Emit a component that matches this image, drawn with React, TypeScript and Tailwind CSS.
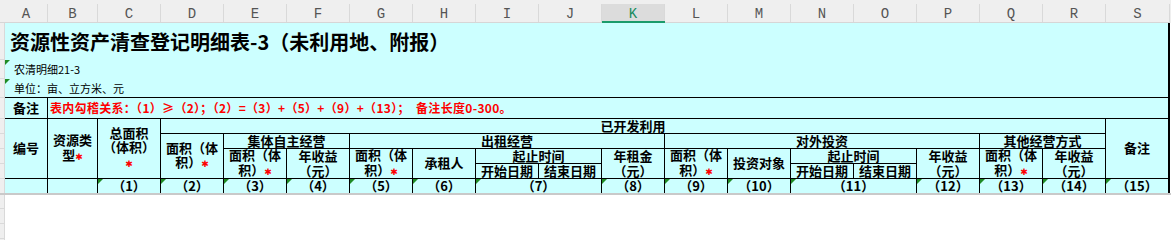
import type { ReactNode } from "react";

const COLS = ["A", "B", "C", "D", "E", "F", "G", "H", "I", "J", "K", "L", "M", "N", "O", "P", "Q", "R", "S"];

const WIDTH: Record<string, string> = {
  A: "w-[43px]",
  B: "w-[50px]",
  S: "w-[64px]",
};

function Tri() {
  return (
    <span className="absolute left-0 top-0 h-0 w-0 border-t-[5px] border-r-[5px] border-t-[#1f8b24] border-r-transparent" />
  );
}

function Star() {
  return <span className="font-['DejaVu_Sans',sans-serif] text-[9px] text-[#ff0000]">✱</span>;
}

// header cell; span classes come in through className
function Hd({ className = "", children }: { className?: string; children?: ReactNode }) {
  return (
    <div
      className={`flex items-center justify-center border-r border-b border-black text-center text-[13px] font-bold ${className}`}
    >
      <div className="leading-[14.5px] whitespace-nowrap">{children}</div>
    </div>
  );
}

function Num({ className = "", tri = true, children }: { className?: string; tri?: boolean; children?: ReactNode }) {
  return (
    <div className={`relative flex items-center justify-center border-r border-black text-[13px] font-bold ${className}`}>
      {tri && <Tri />}
      <span className="leading-[14px]">{children}</span>
    </div>
  );
}

export default function App() {
  return (
    <div className="h-[240px] w-[1171px] overflow-hidden bg-white font-['Noto_Sans_CJK_SC','Noto_Sans',sans-serif] text-black">
      {/* column letters */}
      <div className="flex flex-col bg-[#efefef]">
        <div className="h-[4px]" />
        <div className="flex h-[19px]">
          <div className="w-[5px] shrink-0 border-b border-[#d6d6d6]" />
          {COLS.map((c) => (
            <div
              key={c}
              className={`flex shrink-0 ${WIDTH[c] ?? "w-[63px]"} ${
                c === "K"
                  ? "border-b-2 border-[#1b9b6b] bg-[#dcdcdc] text-[#168a5c]"
                  : "border-b border-[#d6d6d6] text-[#555]"
              }`}
            >
              <span className="flex-1 pt-[2px] text-center font-['Liberation_Mono',monospace] text-[14px] leading-[16px]">
                {c}
              </span>
              <span className="w-px bg-[#d9d9d9]" />
            </div>
          ))}
        </div>
      </div>

      <div className="flex">
        <div className="flex w-[5px] shrink-0 flex-col border-r border-[#d9d9d9] bg-[#efefef]">
          <div className="h-[37px] border-b border-[#dadada]" />
          <div className="h-[19px] border-b border-[#dadada]" />
          <div className="h-[19px] border-b border-[#dadada]" />
          <div className="h-[21px] border-b border-[#dadada]" />
          <div className="h-[15px] border-b border-[#dadada]" />
          <div className="h-[15px] border-b border-[#dadada]" />
          <div className="h-[15px] border-b border-[#dadada]" />
          <div className="h-[15px] border-b border-[#dadada]" />
          <div className="h-[14px]" />
        </div>

        <div className="grid grid-cols-[43px_50px_repeat(16,63px)_64px] grid-rows-[37px_19px_19px_21px_15px_15px_15px_15px_14px] bg-[#ccffff]">
          <div className="col-span-19 flex items-center border-r-2 border-black pl-[5px] text-[20px] font-bold">
            资源性资产清查登记明细表-3（未利用地、附报）
          </div>
          <div className="relative col-span-19 flex items-center border-r-2 border-black pl-[9px] text-[11px]">
            <Tri />
            农清明细21-3
          </div>
          <div className="relative col-span-19 flex items-center border-r-2 border-b border-black pl-[9px] text-[11px]">
            <Tri />
            单位：亩、立方米、元
          </div>

          <div className="flex items-center justify-center border-r border-b border-black text-[13px] font-bold">备注</div>
          <div className="col-span-18 flex items-center border-r-2 border-b border-black pl-[2px] text-[12px] font-bold tracking-[0.3px] text-[#ff0000]">
            表内勾稽关系：（1）≥（2）；（2）=（3）+（5）+（9）+（13）；　备注长度0-300。
          </div>

          {/* header row 1 */}
          <Hd className="row-span-4">编号</Hd>
          <Hd className="row-span-4">
            资源类
            <br />
            型<Star />
          </Hd>
          <Hd className="row-span-4">
            总面积
            <br />
            （体积）
            <br />
            <Star />
          </Hd>
          <Hd className="col-span-15">已开发利用</Hd>
          <Hd className="row-span-4 border-r-2">备注</Hd>

          {/* header row 2 */}
          <Hd className="row-span-3">
            面积（体
            <br />
            积）<Star />
          </Hd>
          <Hd className="col-span-2">集体自主经营</Hd>
          <Hd className="col-span-5">出租经营</Hd>
          <Hd className="col-span-5">对外投资</Hd>
          <Hd className="col-span-2">其他经营方式</Hd>

          {/* header row 3 */}
          <Hd className="row-span-2">
            面积（体
            <br />
            积）<Star />
          </Hd>
          <Hd className="row-span-2">
            年收益
            <br />
            （元）
          </Hd>
          <Hd className="row-span-2">
            面积（体
            <br />
            积）<Star />
          </Hd>
          <Hd className="row-span-2">承租人</Hd>
          <Hd className="col-span-2">起止时间</Hd>
          <Hd className="row-span-2">
            年租金
            <br />
            （元）
          </Hd>
          <Hd className="row-span-2">
            面积（体
            <br />
            积）<Star />
          </Hd>
          <Hd className="row-span-2">投资对象</Hd>
          <Hd className="col-span-2">起止时间</Hd>
          <Hd className="row-span-2">
            年收益
            <br />
            （元）
          </Hd>
          <Hd className="row-span-2">
            面积（体
            <br />
            积）<Star />
          </Hd>
          <Hd className="row-span-2">
            年收益
            <br />
            （元）
          </Hd>

          {/* header row 4 */}
          <Hd>开始日期</Hd>
          <Hd>结束日期</Hd>
          <Hd>开始日期</Hd>
          <Hd>结束日期</Hd>

          {/* column numbers */}
          <div className="border-r border-black" />
          <div className="border-r border-black" />
          <Num>（1）</Num>
          <Num>（2）</Num>
          <Num>（3）</Num>
          <Num>（4）</Num>
          <Num>（5）</Num>
          <Num>（6）</Num>
          <Num className="col-span-2">（7）</Num>
          <Num>（8）</Num>
          <Num>（9）</Num>
          <Num>（10）</Num>
          <Num className="col-span-2">（11）</Num>
          <Num>（12）</Num>
          <Num>（13）</Num>
          <Num>（14）</Num>
          <Num className="border-r-2">（15）</Num>
        </div>
      </div>

      <div className="h-[2px] bg-[#c9c9c9]" />

      <div className="flex">
        <div className="flex w-[5px] shrink-0 flex-col border-r border-[#d9d9d9] bg-[#efefef]">
          <div className="h-[14px] border-b border-[#dadada]" />
          <div className="h-[15px] border-b border-[#dadada]" />
          <div className="h-[15px] border-b border-[#dadada]" />
          <div className="h-[15px]" />
        </div>
      </div>
    </div>
  );
}
